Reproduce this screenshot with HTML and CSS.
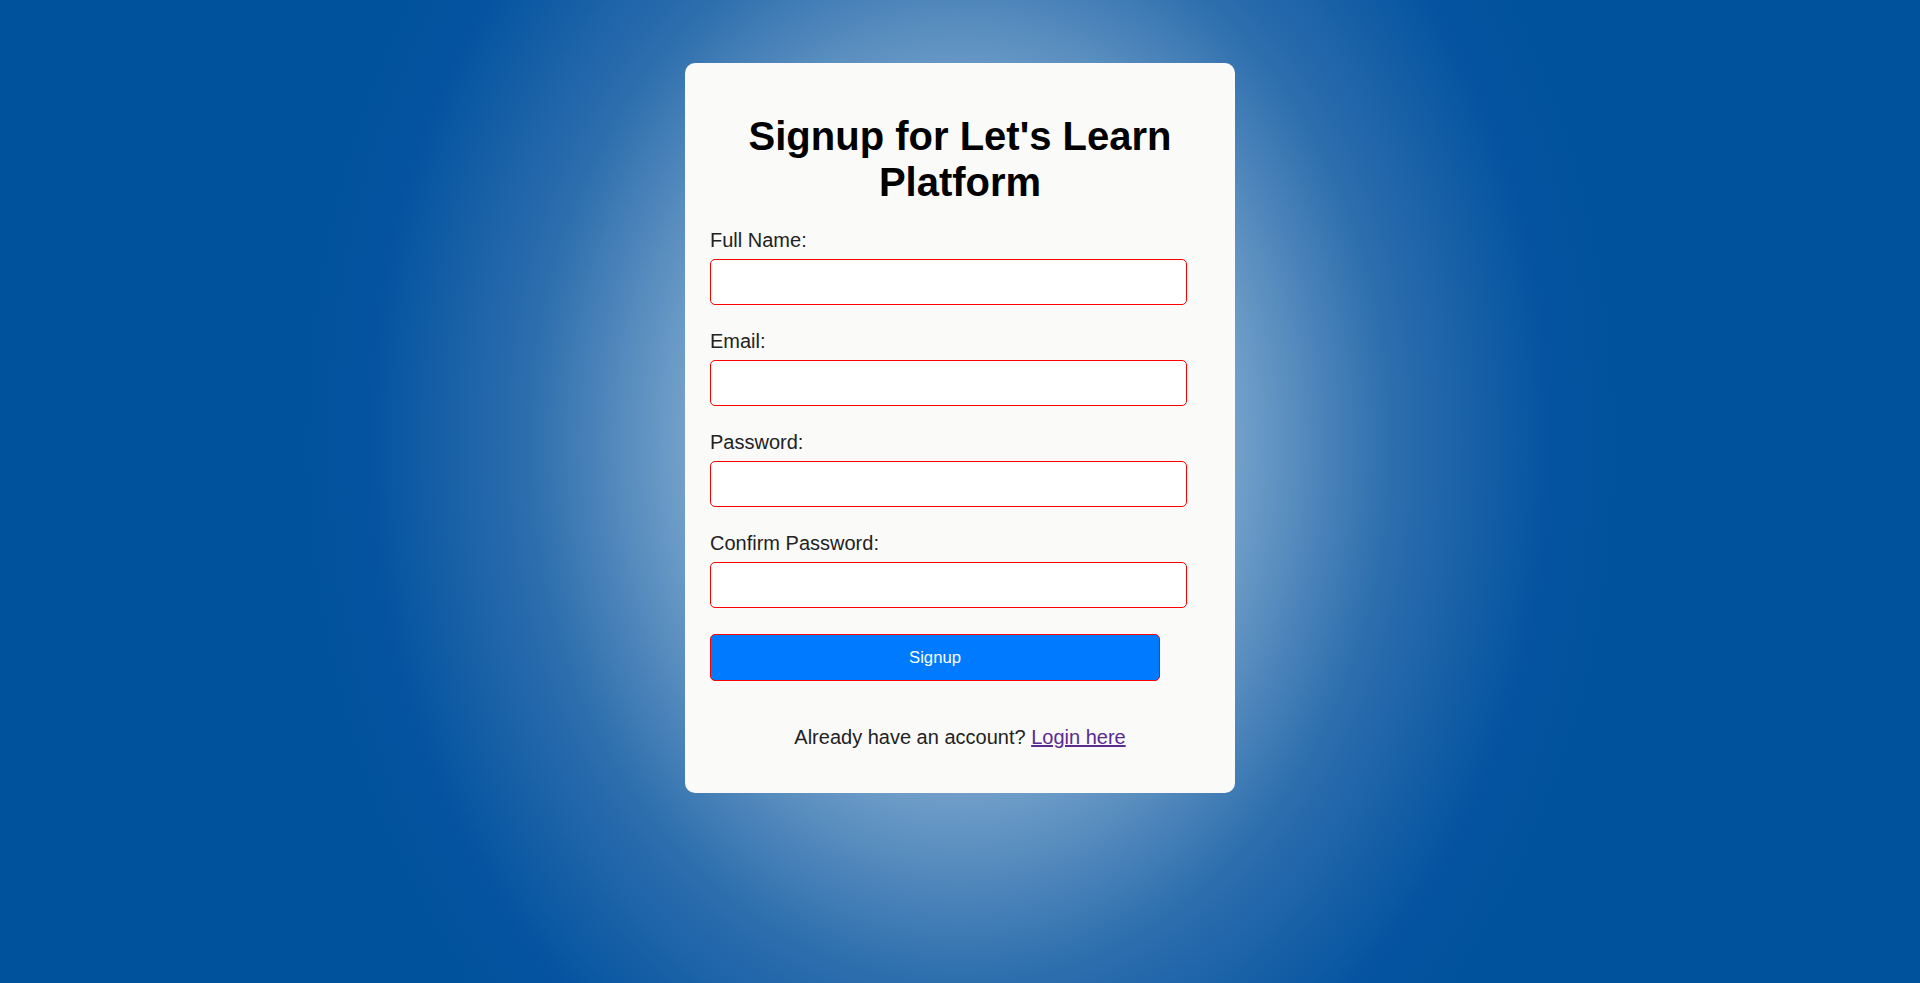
FILE: index.html
```html
<!DOCTYPE html>
<html lang="en">
<head>
<meta charset="utf-8">
<title>Signup - Let's Learn</title>
<link rel="stylesheet" href="styles.css">
</head>
<body>
<main class="page">
  <section class="card">
    <h1 class="title">Signup for Let's Learn Platform</h1>
    <form class="form">
      <div class="field">
        <label class="label" for="name">Full Name:</label>
        <input class="input" id="name" type="text">
      </div>
      <div class="field">
        <label class="label" for="email">Email:</label>
        <input class="input" id="email" type="email">
      </div>
      <div class="field">
        <label class="label" for="pw">Password:</label>
        <input class="input" id="pw" type="password">
      </div>
      <div class="field">
        <label class="label" for="pw2">Confirm Password:</label>
        <input class="input" id="pw2" type="password">
      </div>
      <button class="btn" type="button">Signup</button>
    </form>
    <p class="footer">Already have an account? <a class="link" href="#">Login here</a></p>
  </section>
</main>
</body>
</html>
```

FILE: styles.css
```css
html, body {
  margin: 0;
  padding: 0;
  height: 100%;
}

body {
  font-family: "Liberation Sans", Arial, sans-serif;
  background-color: #00529c;
  background-image: radial-gradient(ellipse 680px 850px at 50% 45%, #9cbcdb 0%, #7aa5cc 38%, #2e6fae 63%, #0453a0 87%, #00529c 100%);
  background-repeat: no-repeat;
  overflow: hidden;
}

.page {
  display: flex;
  flex-direction: column;
  align-items: center;
  padding-top: 63px;
}

.card {
  box-sizing: border-box;
  width: 550px;
  padding: 25px;
  background: #fafaf8;
  border-radius: 10px;
}

.title {
  margin: 25px 0 24px;
  font-size: 40px;
  line-height: 46px;
  font-weight: bold;
  color: #000;
  text-align: center;
}

.form {
  display: flex;
  flex-direction: column;
  align-items: flex-start;
}

.field {
  display: flex;
  flex-direction: column;
  align-items: flex-start;
  margin-bottom: 25px;
}

.label {
  font-size: 20px;
  line-height: 23px;
  color: #222;
  margin-bottom: 7px;
}

.input {
  box-sizing: border-box;
  width: 477px;
  height: 46px;
  margin: 0;
  padding: 0 10px;
  border: 1px solid #ff0000;
  border-radius: 5px;
  background: #fff;
  font-family: inherit;
  font-size: 20px;
}

.btn {
  box-sizing: border-box;
  width: 450px;
  height: 47px;
  margin: 1px 0 0;
  border: 1px solid #ff0000;
  border-radius: 5px;
  background: #007bff;
  color: #fff;
  font-family: "Liberation Sans", Arial, sans-serif;
  font-size: 16.67px;
  cursor: pointer;
}

.footer {
  margin: 45px 0 19px;
  font-size: 20px;
  line-height: 23px;
  color: #222;
  text-align: center;
}

.link {
  color: #5a2a90;
  text-decoration: underline;
}
```
